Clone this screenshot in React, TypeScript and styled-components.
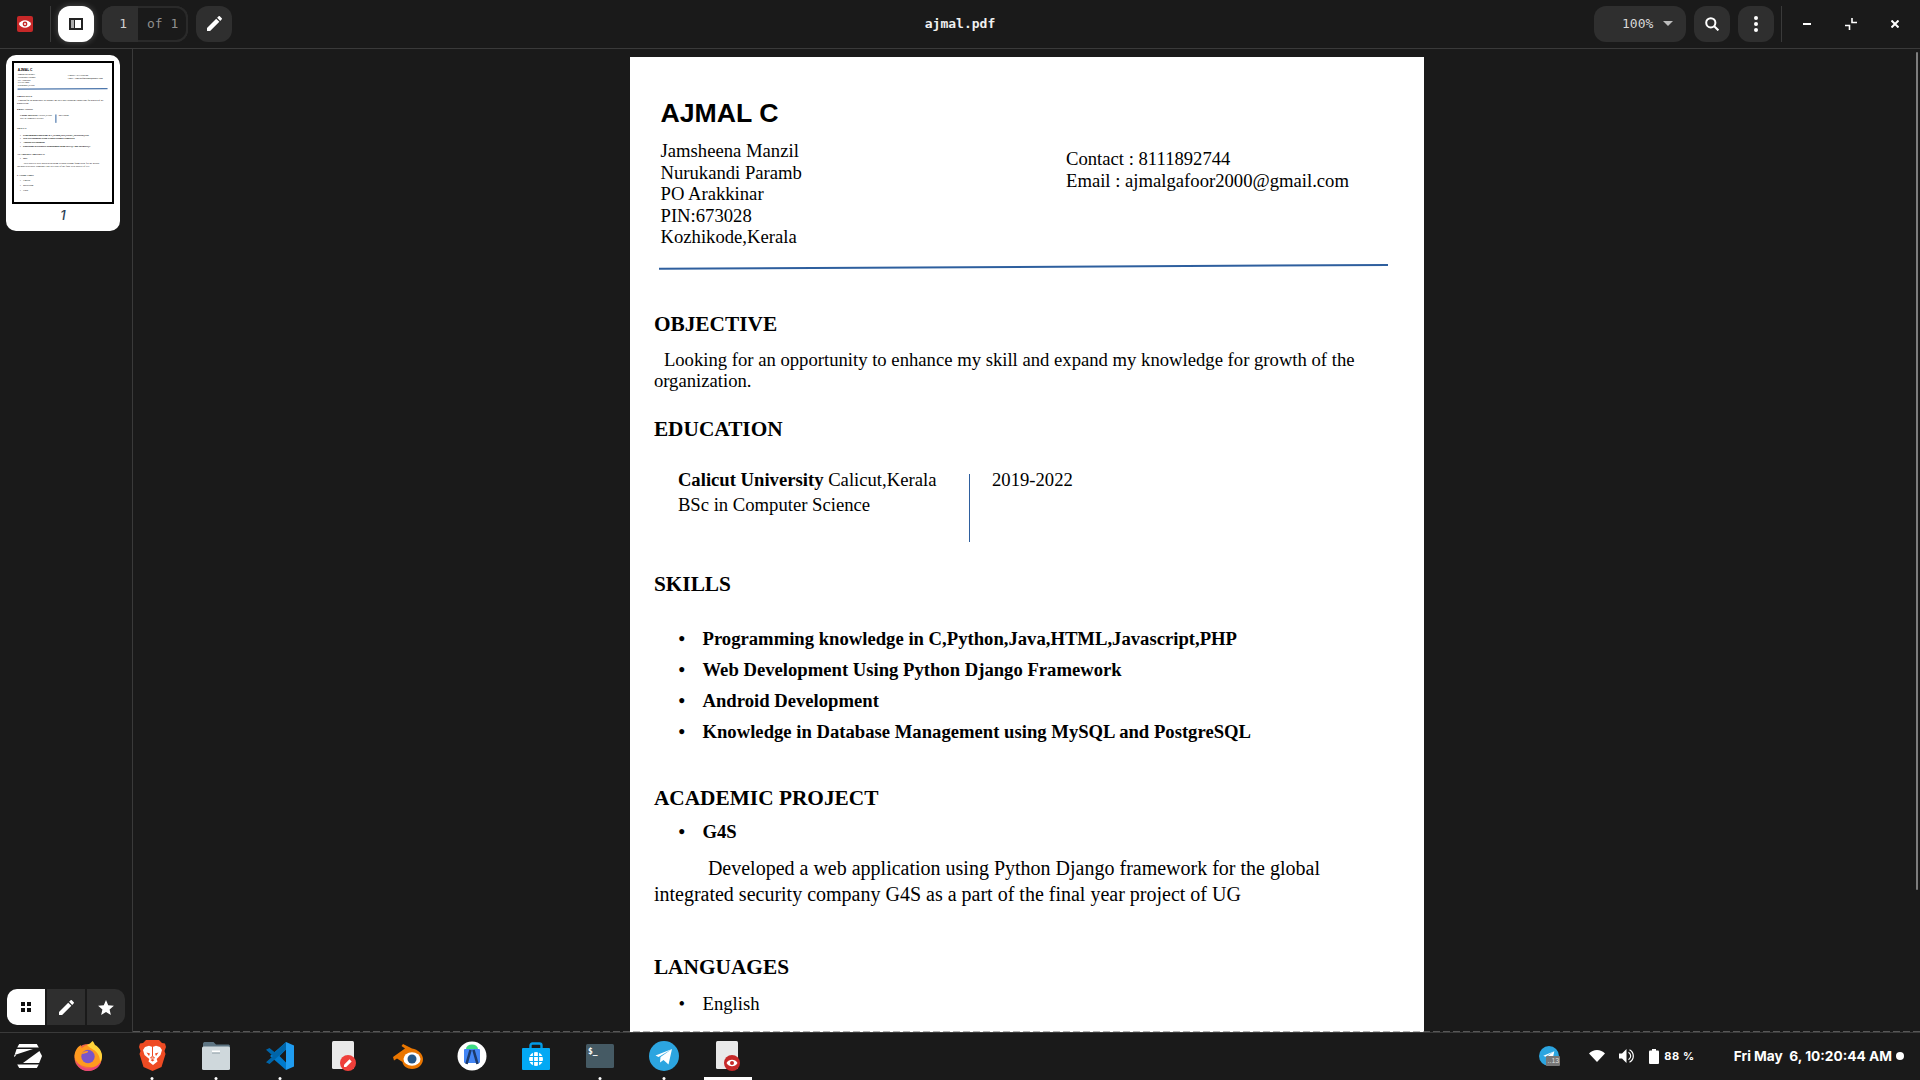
import React from "react";
import styled, { createGlobalStyle } from "styled-components";

const Global = createGlobalStyle`
  html, body { margin: 0; padding: 0; height: 100%; overflow: hidden; background: #1a1a1a; }
  * { box-sizing: border-box; }
`;

const Shell = styled.div`
  display: flex; flex-direction: column; width: 1920px; height: 1080px; background: #1a1a1a; overflow: hidden;
`;

/* ---------- toolbar ---------- */
const Toolbar = styled.header`
  flex: none; height: 49px; display: grid; grid-template-columns: 1fr auto 1fr; align-items: center;
  padding-bottom: 1px; border-bottom: 1px solid #3a3a3a; background: #1a1a1a;
  font-family: "DejaVu Sans Mono", "Liberation Mono", monospace; font-size: 13px; color: #d8d8d8;
`;
const ToolGroup = styled.div<{ $end?: boolean }>`
  display: flex; align-items: center; gap: 8px; justify-content: ${p => (p.$end ? "flex-end" : "flex-start")};
`;
const AppMark = styled.div` margin-left: 17px; margin-right: 9px; display: flex; `;
const ToolDivider = styled.div<{ $left?: number; $right?: number }>`
  width: 1px; height: 36px; background: #3a3a3a; margin: 0 ${p => p.$right ?? 0}px 0 ${p => p.$left ?? 0}px;
`;
const IconButton = styled.button<{ $active?: boolean }>`
  width: 36px; height: 36px; border: 0; padding: 0; border-radius: 12px; display: flex; align-items: center; justify-content: center;
  background: ${p => (p.$active ? "#fff" : "#2f2f2f")}; color: ${p => (p.$active ? "#111" : "#fff")};
  box-shadow: ${p => (p.$active ? "0 0 6px rgba(255,255,255,.25)" : "none")};
`;
const PageBox = styled.div`
  width: 86px; height: 36px; display: flex; border-radius: 12px; overflow: hidden; background: #2f2f2f;
`;
const PageCurrent = styled.div`
  width: 34px; display: flex; align-items: center; justify-content: flex-end; padding-right: 9px; color: #cfcfcf; background: #2f2f2f;
`;
const PageTotal = styled.div`
  flex: 1; display: flex; align-items: center; padding-left: 9px; color: #8f8f8f; background: #1a1a1a;
  border: 2px solid #2a2a2a; border-left: 0; border-radius: 0 12px 12px 0;
  margin-left: 2px;
`;
const Title = styled.div`
  font-weight: 700; color: #f0f0f0; letter-spacing: 0; text-align: center;
`;
const ZoomBox = styled.div`
  width: 92px; height: 36px; border-radius: 12px; background: #2f2f2f; display: flex; align-items: center; padding-left: 28px; gap: 10px; color: #d8d8d8;
`;
const Caret = styled.span`
  width: 0; height: 0; border-left: 5px solid transparent; border-right: 5px solid transparent; border-top: 5px solid #bdbdbd;
`;
const WinButton = styled.button`
  width: 44px; height: 36px; border: 0; padding: 0; background: transparent; color: #fff; display: flex; align-items: center; justify-content: center;
`;
const WinGroup = styled.div` display: flex; margin-left: -5px; margin-right: 3px; `;

/* ---------- resume ---------- */
const ResumeBody = styled.div` background: #fff; width: 794px; height: 1123px; color: #000; font-family: "Liberation Serif", serif; font-size: 18.67px; padding-top: 41px; `;
const Name = styled.h1`
  margin: 0 0 0 31px; font: 700 26.67px/30px "Liberation Sans", sans-serif;
`;
const HeaderRow = styled.div` display: flex; margin: 12.3px 0 0 31px; line-height: 21.4px; `;
const Address = styled.div` width: 405.5px; `;
const Contact = styled.div` padding-top: 8px; `;
const Rule = styled.svg` display: block; margin: 16.7px 0 0 29px; `;
const Content = styled.div` padding: 0 40px 0 24.4px; `;
const Heading = styled.h2<{ $gap: number }>`
  margin: ${p => p.$gap}px 0 0; font-size: 21.33px; line-height: 26px; font-weight: 700;
`;
const Paragraph = styled.p<{ $gap: number; $indent: number; $leading: number; $size?: number }>`
  margin: ${p => p.$gap}px 0 0; text-indent: ${p => p.$indent}px; line-height: ${p => p.$leading}px; font-size: ${p => p.$size ?? 18.67}px;
`;
const EducationRow = styled.div` display: flex; margin: 25px 0 0 24px; line-height: 25px; `;
const EducationText = styled.div` width: 291.1px; `;
const EducationRuleLine = styled.div` width: 1px; height: 68px; margin-top: 7px; background: #2e5f9e; `;
const EducationYear = styled.div` margin-left: 22px; `;
const BulletList = styled.ul<{ $gap: number }>` list-style: none; margin: ${p => p.$gap}px 0 0 23.6px; padding: 0; `;
const Bullet = styled.li<{ $bold?: boolean; $leading: number }>`
  display: flex; line-height: ${p => p.$leading}px; font-weight: ${p => (p.$bold ? 700 : 400)};
  &::before { content: "•"; width: 24px; flex: none; padding-left: 1px; }
`;

const Resume = () => (
  <ResumeBody>
    <Name>AJMAL C</Name>
    <HeaderRow>
      <Address>
        <div>Jamsheena Manzil</div>
        <div>Nurukandi Paramb</div>
        <div>PO Arakkinar</div>
        <div>PIN:673028</div>
        <div>Kozhikode,Kerala</div>
      </Address>
      <Contact>
        <div>Contact : 8111892744</div>
        <div>Email : ajmalgafoor2000@gmail.com</div>
      </Contact>
    </HeaderRow>
    <Rule width="730" height="6" viewBox="0 0 730 6">
      <line x1="0" y1="4.8" x2="729" y2="1" stroke="#2e5f9e" strokeWidth="2" />
    </Rule>
    <Content>
      <Heading $gap={41}>OBJECTIVE</Heading>
      <Paragraph $gap={11.7} $indent={10} $leading={21}>
        Looking for an opportunity to enhance my skill and expand my knowledge for growth of the organization.
      </Paragraph>
      <Heading $gap={25}>EDUCATION</Heading>
      <EducationRow>
        <EducationText>
          <div><b>Calicut University</b> Calicut,Kerala</div>
          <div>BSc in Computer Science</div>
        </EducationText>
        <EducationRuleLine />
        <EducationYear>2019-2022</EducationYear>
      </EducationRow>
      <Heading $gap={29}>SKILLS</Heading>
      <BulletList $gap={26.1}>
        <Bullet $bold $leading={31}>Programming knowledge in C,Python,Java,HTML,Javascript,PHP</Bullet>
        <Bullet $bold $leading={31}>Web Development Using Python Django Framework</Bullet>
        <Bullet $bold $leading={31}>Android Development</Bullet>
        <Bullet $bold $leading={31}>Knowledge in Database Management using MySQL and PostgreSQL</Bullet>
      </BulletList>
      <Heading $gap={38.7}>ACADEMIC PROJECT</Heading>
      <BulletList $gap={7.4}>
        <Bullet $bold $leading={26}>G4S</Bullet>
      </BulletList>
      <Paragraph $gap={10.5} $indent={54} $leading={26} $size={20}>
        Developed a web application using Python Django framework for the global integrated security company G4S as a part of the final year project of UG
      </Paragraph>
      <Heading $gap={46.7}>LANGUAGES</Heading>
      <BulletList $gap={8.5}>
        <Bullet $leading={30}>English</Bullet>
        <Bullet $leading={50}>Malayalam</Bullet>
        <Bullet $leading={40}>Hindi</Bullet>
      </BulletList>
    </Content>
  </ResumeBody>
);

/* ---------- workspace ---------- */
const Workspace = styled.div` flex: 1; min-height: 0; display: flex; `;
const Sidebar = styled.aside`
  flex: none; width: 133px; border-right: 1px solid #3a3a3a; display: flex; flex-direction: column; justify-content: space-between;
  padding: 6px 0 7px 6px;
`;
const ThumbCard = styled.div`
  width: 114px; height: 176px; background: #fff; border-radius: 10px; padding: 6px; display: flex; flex-direction: column; align-items: center;
`;
const ThumbFrame = styled.div`
  width: 102px; height: 143px; border: 2px solid #000; overflow: hidden; flex: none;
`;
const ThumbScale = styled.div`
  width: 794px; transform: scale(0.1234); transform-origin: 0 0;
  ${Rule} { overflow: visible; }
  ${Rule} line { stroke-width: 11px; opacity: .85; }
  ${EducationRuleLine} { transform: scaleX(8); }
`;
const ThumbNumber = styled.div`
  margin-top: 3px; font: italic 500 13px/16px Inter, sans-serif; color: #2b3e55;
`;
const ModeTabs = styled.div`
  width: 118px; height: 36px; margin-left: 1px; display: flex; gap: 2px; border-radius: 10px; overflow: hidden;
`;
const ModeTab = styled.button<{ $active?: boolean }>`
  flex: 1; border: 0; padding: 0; display: flex; align-items: center; justify-content: center;
  background: ${p => (p.$active ? "#fff" : "#2f2f2f")}; color: ${p => (p.$active ? "#111" : "#fff")};
`;
const Viewer = styled.main`
  flex: 1; min-width: 0; position: relative; overflow: hidden; display: flex; justify-content: center; padding-top: 8px;
  &::after {
    content: ""; position: absolute; left: 0; right: 0; bottom: 0; height: 1px;
    background: repeating-linear-gradient(90deg, rgba(128,128,128,.6) 0 7px, transparent 7px 10px);
  }
`;
const ScrollThumb = styled.div`
  position: absolute; right: 2px; top: 3px; width: 2px; height: 838px; background: #7d7d7d; border-radius: 1px;
`;
const PdfPage = styled.article` flex: none; width: 794px; height: 1123px; overflow: hidden; `;

/* ---------- taskbar ---------- */
const Taskbar = styled.footer`
  flex: none; height: 48px; border-top: 1px solid #3a3a3a; background: #1a1a1a; display: flex; justify-content: space-between; align-items: stretch;
`;
const Dock = styled.nav` display: flex; `;
const DockSlot = styled.div<{ $active?: boolean; $running?: boolean; $width?: number }>`
  position: relative; width: ${p => p.$width ?? 64}px; display: flex; align-items: center; justify-content: center; padding-bottom: 2px;
  &::after {
    content: ""; position: absolute; bottom: 0; left: 50%;
    width: ${p => (p.$active ? "48px" : p.$running ? "3px" : "0")};
    height: 3px;
    transform: translateX(-50%);
    background: #fff; border-radius: ${p => (p.$active ? "0" : "50%")};
  }
`;
const Tray = styled.div`
  display: flex; align-items: center; padding: 0 16px 1px 0; color: #fff; font-family: Inter, sans-serif; font-weight: 700;
`;
const TrayBadgeWrap = styled.div` position: relative; width: 20px; height: 20px; margin-right: 30px; `;
const TrayBadge = styled.span`
  position: absolute; right: -1px; bottom: 0; width: 14px; height: 10px; background: #777; border-radius: 1px;
  color: #ddd; font: 400 7px/10px "Liberation Sans", sans-serif; text-align: right; padding-right: 1px;
`;
const TrayIcon = styled.span<{ $gap: number }>` display: flex; margin-right: ${p => p.$gap}px; `;
const Battery = styled.span` font-size: 11px; letter-spacing: .6px; margin-right: 39px; `;
const Clock = styled.span` font-size: 13.7px; white-space: pre; margin-right: 4px; `;
const StatusDot = styled.span` width: 8px; height: 8px; border-radius: 50%; background: #fff; `;

/* ---------- icons ---------- */
const EyeMark = () => (
  <svg width="16" height="16" viewBox="0 0 16 16">
    <rect width="16" height="16" rx="2" fill="#c62828" />
    <path d="M1.8 8C3.2 5.4 5.4 4.2 8 4.2s4.8 1.2 6.2 3.8c-1.4 2.600-3.600 3.800-6.200 3.800S3.200 10.600 1.800 8z" fill="#fff" />
    <circle cx="8" cy="8" r="2.400" fill="#c62828" />
    <circle cx="8" cy="8" r="1" fill="#fff" />
  </svg>
);
const SidebarGlyph = () => (
  <svg width="14" height="12" viewBox="0 0 14 12">
    <rect width="14" height="12" fill="#222" />
    <rect x="2" y="2" width="3" height="8" fill="#aaa" />
    <rect x="6" y="2" width="6" height="8" fill="#fff" />
  </svg>
);
const Pencil = ({ size = 15 }: { size?: number }) => (
  <svg width={size} height={size} viewBox="3 3 18 18" fill="currentColor">
    <path d="M3 17.25V21h3.75L17.81 9.94l-3.75-3.75L3 17.25zM20.71 7.04a1 1 0 0 0 0-1.41l-2.34-2.34a1 1 0 0 0-1.41 0l-1.83 1.83 3.75 3.75 1.83-1.83z" />
  </svg>
);
const SearchGlyph = () => (
  <svg width="14" height="14" viewBox="0 0 14 14" fill="none" stroke="#fff" strokeWidth="2">
    <circle cx="5.8" cy="5.8" r="4.6" /><line x1="9" y1="9" x2="13.4" y2="13.4" />
  </svg>
);
const DotsGlyph = () => (
  <svg width="4" height="16" viewBox="0 0 4 16" fill="#fff">
    <circle cx="2" cy="2" r="2" /><circle cx="2" cy="8" r="2" /><circle cx="2" cy="14" r="2" />
  </svg>
);
const MinGlyph = () => <svg width="8" height="2" viewBox="0 0 8 2"><rect width="8" height="2" fill="#fff" /></svg>;
const RestoreGlyph = () => (
  <svg width="12" height="12" viewBox="0 0 12 12" fill="none" stroke="#fff" strokeWidth="1.6">
    <path d="M7 0v4.500h5M0 7.500h4.500V12" />
  </svg>
);
const CloseGlyph = () => (
  <svg width="8" height="8" viewBox="0 0 8 8" stroke="#fff" strokeWidth="2"><path d="M.5.5l7 7M7.500.5l-7 7" /></svg>
);
const GridGlyph = () => (
  <svg width="10" height="10" viewBox="0 0 10 10" fill="#111">
    <rect width="4" height="4" /><rect x="6" width="4" height="4" /><rect y="6" width="4" height="4" /><rect x="6" y="6" width="4" height="4" />
  </svg>
);
const StarGlyph = () => (
  <svg width="16" height="15" viewBox="2 2 20 19" fill="#fff">
    <path d="M12 17.27L18.180 21l-1.640-7.030L22 9.240l-7.190-.610L12 2 9.190 8.630 2 9.240l5.460 4.730L5.820 21z" />
  </svg>
);

const ZorinIcon = () => (
  <svg width="28" height="24" viewBox="0 0 28 24" fill="#fff">
    <polygon points="5.200,0 22.800,0 24.800,3.400 3.200,3.400" />
    <polygon points="2.600,5 19,5 .6,11" />
    <polygon points="0,12 .6,11 2,11 .6,13" />
    <polygon points="25.400,7 28,12 25.200,19 9,19" />
    <polygon points="3.200,20.600 24.800,20.600 22.800,24 5.200,24" />
  </svg>
);
const FirefoxIcon = () => (
  <svg width="30" height="30" viewBox="0 0 30 30">
    <circle cx="15" cy="16.500" r="13.500" fill="#f2664a" />
    <path d="M1.500 15C2 8 6 5 8 4c-.5 1.500 0 2.500 1 3 2-2 4-3.500 7-3 7 0 13 5 13 12 0 3-1 5.500-3 7.500-2.500 2-6 3-10 2.500C8 25.500 2 22 1.500 15z" fill="#ff9a1f" />
    <path d="M14 4c2-1 4-2 5.500-4 1.500 1.500 2 3 2.500 4 4 2 7 6.500 7 11 0 2-1 4-2 5.500 0-5.500-3-10-7-12C18 7 15.500 6 14 4z" fill="#ffd43a" />
    <circle cx="15" cy="15.500" r="6.700" fill="#7a55c9" />
    <path d="M8.500 13c1.200-2 3.800-3.200 6.500-3 .5 1-1 2-3 2.300-1 .2-2.200.8-3.500.7z" fill="#ff9a1f" />
    <path d="M3 20c3 5 7.500 7.500 12 7.500 5 0 10-2.500 13-7-.5 5-6.500 9.500-13 9.500-5.500 0-10.500-4-12-10z" fill="#e8457a" />
  </svg>
);
const BraveIcon = () => (
  <svg width="27" height="31" viewBox="0 0 27 31">
    <path d="M7 0h13l3 3 3 .5L27 7l-1.500 4 1 3-4 13-9 4-9-4L.5 14l1-3L0 7l1-3.500L4 3z" fill="#ef4b23" />
    <path d="M6 7l4-1.200L13.500 7 17 5.800 21 7l2 3-1.500 5-3.800 4 .8 2.500-4.500 3.500-4.500-3.500.8-2.500L5.500 15 4 10z" fill="#fff" />
    <path d="M7.500 12.500l3.500 1-1 2.500zM19.500 12.500l-3.500 1 1 2.500zM11.500 20l2-1 2 1-2 1.500z" fill="#ef4b23" />
    <path d="M13.500 7v9l-2 2h4l-2-2" fill="none" stroke="#ef4b23" strokeWidth="1" />
  </svg>
);
const FilesIcon = () => (
  <svg width="28" height="28" viewBox="0 0 28 28">
    <path d="M1 2c0-1 .5-2 1.500-2h9L14 2.500h12c1 0 2 .5 2 2V8H1z" fill="#5d7482" />
    <rect y="4.500" width="28" height="23.500" rx="1.500" fill="#cfd8dc" />
    <rect x="10" y="8.500" width="8" height="2" fill="#fff" />
    <rect x="10" y="10.500" width="8" height="1" fill="#8f9ea6" />
  </svg>
);
const VSCodeIcon = () => (
  <svg width="28" height="28" viewBox="0 0 28 28">
    <path d="M20 0l8 3.500v21L20 28z" fill="#1f9cf0" />
    <path d="M20 7.500L13.500 14l6.500 6.500V28L4 14 20 0z" fill="#007acc" />
    <path d="M0 20.200L3.500 22 20 7.500V0L9 10.500 3.500 6 0 7.800 7 14z" fill="#0065a9" />
  </svg>
);
const NoteIcon = ({ eye }: { eye?: boolean }) => (
  <svg width="24" height="30" viewBox="0 0 24 30">
    <rect x="0" y="0" width="22" height="28" rx="1.500" fill="#e9e9e9" />
    <circle cx="16" cy="22" r="8" fill={eye ? "#c62828" : "#ef3f3a"} />
    {eye ? (
      <>
        <path d="M10.500 22c1.300-2.200 3.200-3.200 5.500-3.200s4.200 1 5.500 3.200c-1.300 2.200-3.200 3.200-5.500 3.200s-4.200-1-5.500-3.200z" fill="#fff" />
        <circle cx="16" cy="22" r="2" fill="#c62828" />
      </>
    ) : (
      <path d="M12 26v-2.200l5.500-5.500 2.200 2.200L14.200 26z" fill="#fff" />
    )}
  </svg>
);
const BlenderIcon = () => (
  <svg width="32" height="26" viewBox="0 0 32 26">
    <path d="M1 14l12-8.500L9.500 3 11 1l9 4.500c6 1 11 5.500 11 10.500 0 6-5 10-11 10-5 0-9-3-9.500-7L5 15.500 2 17.500z" fill="#ea7600" />
    <ellipse cx="20" cy="16" rx="8.500" ry="6.800" fill="#fff" />
    <circle cx="20" cy="16" r="4.500" fill="#265787" />
  </svg>
);
const AndroidStudioIcon = () => (
  <svg width="30" height="30" viewBox="0 0 30 30">
    <circle cx="15" cy="15" r="14.500" fill="#fff" />
    <path d="M9 8a6 4.500 0 0 1 12 0z" fill="#3ddc84" />
    <rect x="7" y="8" width="16" height="14" rx="1" fill="#4285f4" />
    <path d="M13.500 9L9.500 23M16.500 9l4 14" stroke="#1c3a6b" strokeWidth="2.600" fill="none" />
  </svg>
);
const StoreIcon = () => (
  <svg width="28" height="28" viewBox="0 0 28 28">
    <path d="M8.500 7V3.500a2 2 0 0 1 2-2h7a2 2 0 0 1 2 2V7" fill="none" stroke="#039be5" strokeWidth="2.400" />
    <rect y="6" width="28" height="22" rx="1" fill="#03a9f4" />
    <circle cx="14" cy="17" r="7" fill="#fff" />
    <path d="M7 14.500h14M7 19.500h14M11.500 10v14M16.500 10v14" stroke="#03a9f4" strokeWidth="1.200" />
  </svg>
);
const TerminalIcon = () => (
  <svg width="28" height="24" viewBox="0 0 28 24">
    <rect width="28" height="24" rx="1.500" fill="#455a64" />
    <text x="2" y="10" fontFamily="DejaVu Sans Mono, monospace" fontSize="8" fontWeight="700" fill="#fff">$_</text>
  </svg>
);
const TelegramIcon = ({ size = 30 }: { size?: number }) => (
  <svg width={size} height={size} viewBox="0 0 30 30">
    <circle cx="15" cy="15" r="15" fill="#2ca5e0" />
    <path d="M6.500 14.500L23 8l-3.500 15.500-5-4.500-3.500 2.500.5-5.500L23 8l-13.500 8z" fill="#fff" />
  </svg>
);
const WifiGlyph = () => (
  <svg width="16" height="12" viewBox="0 0 16 12" fill="#fff"><path d="M0 3.500C2 1.300 5 0 8 0s6 1.300 8 3.500L8 12z" /></svg>
);
const SpeakerGlyph = () => (
  <svg width="15" height="14" viewBox="0 0 15 14" fill="#fff">
    <path d="M0 4.500h3L7.500 0v14L3 9.500H0z" />
    <path d="M9.500 3.200c1.500 1 2.200 2.300 2.200 3.800s-.7 2.800-2.200 3.800M10.500 .8c2.500 1.400 3.800 3.600 3.800 6.200s-1.300 4.800-3.800 6.200" fill="none" stroke="#fff" strokeWidth="1.200" />
  </svg>
);
const BatteryGlyph = () => (
  <svg width="10" height="15" viewBox="0 0 10 15" fill="#fff"><rect x="3" width="4" height="2" /><rect y="1.500" width="10" height="13.500" rx="1" /></svg>
);

export default function App() {
  return (
    <>
      <Global />
      <Shell>
        <Toolbar>
          <ToolGroup>
            <AppMark><EyeMark /></AppMark>
            <ToolDivider $right={-1} />
            <IconButton $active aria-label="Toggle sidebar"><SidebarGlyph /></IconButton>
            <PageBox>
              <PageCurrent>1</PageCurrent>
              <PageTotal>of 1</PageTotal>
            </PageBox>
            <IconButton aria-label="Annotate"><Pencil /></IconButton>
          </ToolGroup>
          <Title>ajmal.pdf</Title>
          <ToolGroup $end>
            <ZoomBox>100%<Caret /></ZoomBox>
            <IconButton aria-label="Search"><SearchGlyph /></IconButton>
            <IconButton aria-label="More"><DotsGlyph /></IconButton>
            <ToolDivider $left={-1} />
            <WinGroup>
              <WinButton aria-label="Minimize"><MinGlyph /></WinButton>
              <WinButton aria-label="Restore"><RestoreGlyph /></WinButton>
              <WinButton aria-label="Close"><CloseGlyph /></WinButton>
            </WinGroup>
          </ToolGroup>
        </Toolbar>
        <Workspace>
          <Sidebar>
            <ThumbCard>
              <ThumbFrame><ThumbScale><Resume /></ThumbScale></ThumbFrame>
              <ThumbNumber>1</ThumbNumber>
            </ThumbCard>
            <ModeTabs>
              <ModeTab $active aria-label="Thumbnails"><GridGlyph /></ModeTab>
              <ModeTab aria-label="Annotations"><Pencil size={15} /></ModeTab>
              <ModeTab aria-label="Bookmarks"><StarGlyph /></ModeTab>
            </ModeTabs>
          </Sidebar>
          <Viewer>
            <PdfPage><Resume /></PdfPage>
            <ScrollThumb />
          </Viewer>
        </Workspace>
        <Taskbar>
          <Dock>
            <DockSlot $width={56}><ZorinIcon /></DockSlot>
            <DockSlot><FirefoxIcon /></DockSlot>
            <DockSlot $running><BraveIcon /></DockSlot>
            <DockSlot $running><FilesIcon /></DockSlot>
            <DockSlot $running><VSCodeIcon /></DockSlot>
            <DockSlot><NoteIcon /></DockSlot>
            <DockSlot><BlenderIcon /></DockSlot>
            <DockSlot><AndroidStudioIcon /></DockSlot>
            <DockSlot><StoreIcon /></DockSlot>
            <DockSlot $running><TerminalIcon /></DockSlot>
            <DockSlot $running><TelegramIcon /></DockSlot>
            <DockSlot $active><NoteIcon eye /></DockSlot>
          </Dock>
          <Tray>
            <TrayBadgeWrap>
              <TelegramIcon size={20} />
              <TrayBadge>..13</TrayBadge>
            </TrayBadgeWrap>
            <TrayIcon $gap={14}><WifiGlyph /></TrayIcon>
            <TrayIcon $gap={15}><SpeakerGlyph /></TrayIcon>
            <TrayIcon $gap={5}><BatteryGlyph /></TrayIcon>
            <Battery>88 %</Battery>
            <Clock>Fri May  6, 10:20:44 AM</Clock>
            <StatusDot />
          </Tray>
        </Taskbar>
      </Shell>
    </>
  );
}
